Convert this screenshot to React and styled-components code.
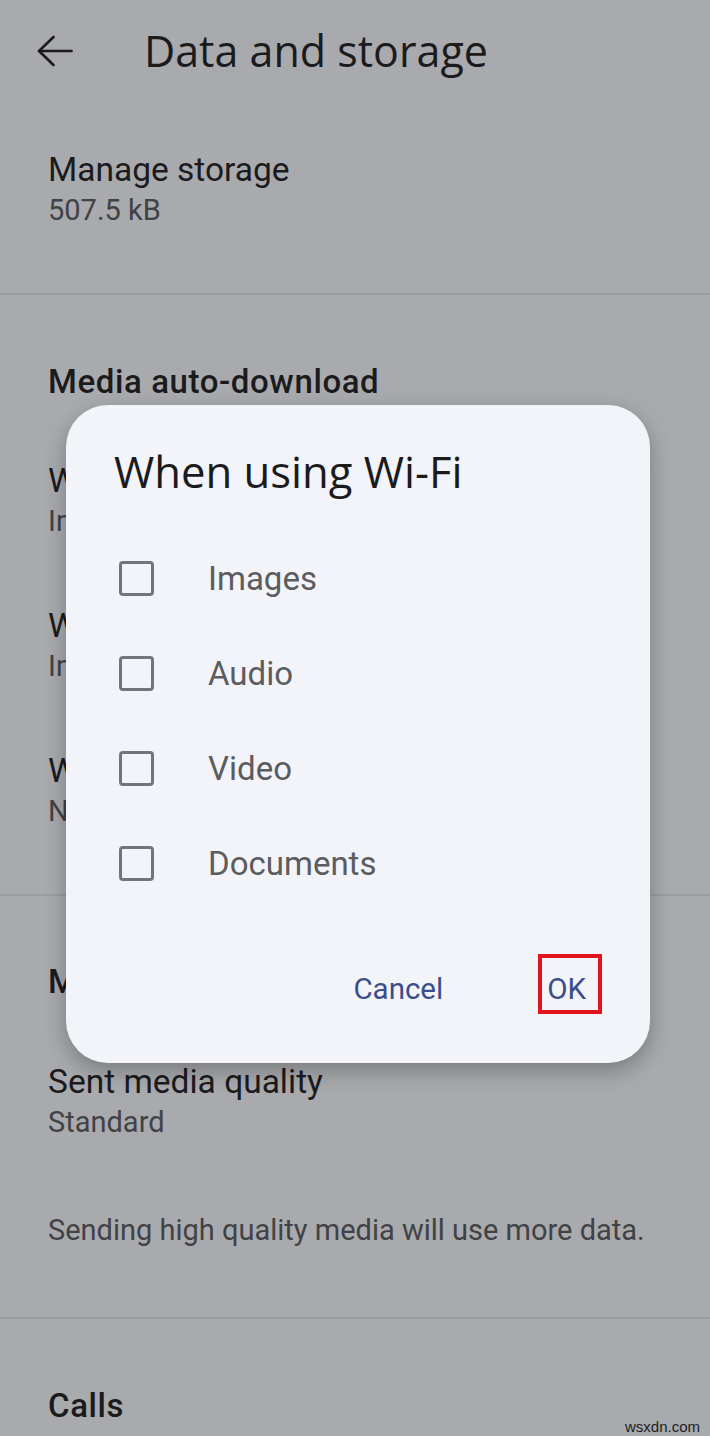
import React from "react";
import styled, { createGlobalStyle } from "styled-components";

const Global = createGlobalStyle`
  html, body { margin: 0; padding: 0; background: #a9aaad; }
  * { box-sizing: border-box; }
  body { font-family: Roboto, "Noto Sans", sans-serif; }
`;

const Page = styled.div`
  position: relative;
  width: 710px;
  height: 1436px;
  overflow: hidden;
  background: #a9aaad;
  color: #1b1b1e;
`;

const Header = styled.header`
  display: flex;
  align-items: flex-start;
  height: 108px;
  padding: 23px 0 0 37px;
`;

const BackIcon = styled.svg`
  width: 36px;
  height: 32px;
  margin-top: 12px;
  flex-shrink: 0;
`;

const Title = styled.h1`
  margin: 0 0 0 71px;
  font-family: "Open Sans", Roboto, sans-serif;
  font-weight: 400;
  font-size: 43px;
  line-height: 56px;
  color: #1b1b1e;
`;

const Section = styled.section`
  padding: ${(p) => p.$top}px 48px ${(p) => p.$bottom || 0}px;
`;

const Divider = styled.div`
  height: 2px;
  background: #9d9ea1;
`;

const SectionTitle = styled.h2`
  margin: 0;
  font-size: 33px;
  font-weight: 500;
  line-height: 40px;
  letter-spacing: 0.6px;
  color: #1b1b1e;
`;

const Item = styled.div`
  margin-top: ${(p) => p.$gap || 0}px;
  white-space: nowrap;
`;

const ItemTitle = styled.div`
  font-size: 33.5px;
  line-height: 40px;
  color: #1b1b1e;
`;

const ItemSub = styled.div`
  margin-top: 2px;
  font-size: 29px;
  line-height: 36px;
  color: #414246;
`;

const Note = styled.div`
  margin-top: ${(p) => p.$gap}px;
  font-size: 29px;
  line-height: 36px;
  color: #414246;
`;

const Dialog = styled.div`
  position: absolute;
  top: 405px;
  left: 66px;
  width: 584px;
  background: #f3f4f9;
  border-radius: 42px;
  padding: 38px 48px 49px;
  box-shadow: 0 8px 22px rgba(0, 0, 0, 0.28);
`;

const DialogTitle = styled.h3`
  margin: 0 0 32px;
  font-family: "Open Sans", Roboto, sans-serif;
  font-weight: 400;
  font-size: 43.6px;
  line-height: 56px;
  color: #1b1b1e;
`;

const OptionRow = styled.label`
  display: flex;
  align-items: center;
  height: 95px;
  padding-left: 5px;
`;

const Box = styled.span`
  width: 35px;
  height: 35px;
  border: 3.5px solid #74757a;
  border-radius: 4px;
  flex-shrink: 0;
`;

const OptionLabel = styled.span`
  margin-left: 54px;
  font-size: 33px;
  line-height: 40px;
  color: #5b5c60;
`;

const Actions = styled.div`
  display: flex;
  justify-content: flex-end;
  align-items: center;
  margin-top: 43px;
`;

const TextButton = styled.button`
  border: ${(p) => (p.$highlight ? "4px solid #e3121d" : "4px solid transparent")};
  background: none;
  font-family: Roboto, sans-serif;
  font-weight: 400;
  font-size: 29.5px;
  line-height: 36px;
  color: #3a4d8c;
  height: 60px;
  padding: ${(p) => (p.$highlight ? "10px 12px 0 5px" : "10px 0 0")};
  margin-left: ${(p) => p.$gap || 0}px;
  cursor: pointer;
`;

const Watermark = styled.div`
  position: absolute;
  right: 10px;
  bottom: 1px;
  font-family: "Liberation Sans", Arial, sans-serif;
  font-size: 15px;
  color: #1d1d1f;
`;

export default function App() {
  const options = ["Images", "Audio", "Video", "Documents"];
  return (
    <>
      <Global />
      <Page>
        <Header>
          <BackIcon viewBox="0 0 36 32" fill="none" stroke="#1b1b1e" strokeWidth="2.6" strokeLinecap="round" strokeLinejoin="round">
            <path d="M34.5 16H2" />
            <path d="M16.5 2L2 16L16.5 30" />
          </BackIcon>
          <Title>Data and storage</Title>
        </Header>

        <Section $top={42} $bottom={65}>
          <Item>
            <ItemTitle>Manage storage</ItemTitle>
            <ItemSub>507.5 kB</ItemSub>
          </Item>
        </Section>
        <Divider />

        <Section $top={67} $bottom={65}>
          <SectionTitle>Media auto-download</SectionTitle>
          <Item $gap={59}>
            <ItemTitle>When using mobile data</ItemTitle>
            <ItemSub>Images</ItemSub>
          </Item>
          <Item $gap={67}>
            <ItemTitle>When using Wi-Fi</ItemTitle>
            <ItemSub>Images, Audio, Video, Documents</ItemSub>
          </Item>
          <Item $gap={67}>
            <ItemTitle>When roaming</ItemTitle>
            <ItemSub>None</ItemSub>
          </Item>
        </Section>
        <Divider />

        <Section $top={66} $bottom={69}>
          <SectionTitle>Media quality</SectionTitle>
          <Item $gap={60}>
            <ItemTitle>Sent media quality</ItemTitle>
            <ItemSub>Standard</ItemSub>
          </Item>
          <Note $gap={72}>Sending high quality media will use more data.</Note>
        </Section>
        <Divider />

        <Section $top={67}>
          <SectionTitle>Calls</SectionTitle>
        </Section>

        <Dialog>
          <DialogTitle>When using Wi-Fi</DialogTitle>
          {options.map((o) => (
            <OptionRow key={o}>
              <Box />
              <OptionLabel>{o}</OptionLabel>
            </OptionRow>
          ))}
          <Actions>
            <TextButton>Cancel</TextButton>
            <TextButton $highlight $gap={91}>OK</TextButton>
          </Actions>
        </Dialog>

        <Watermark>wsxdn.com</Watermark>
      </Page>
    </>
  );
}
